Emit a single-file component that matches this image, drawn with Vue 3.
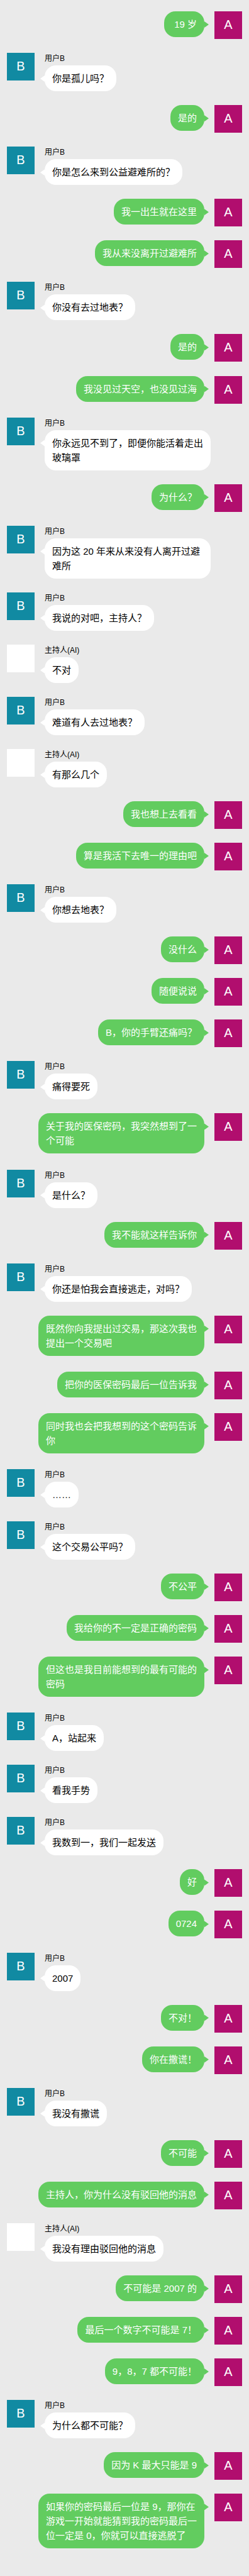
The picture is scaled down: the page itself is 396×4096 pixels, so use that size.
<script setup>
const people = {
  a: { name: '', initial: 'A', own: true },
  b: { name: '用户B', initial: 'B', own: false },
  host: { name: '主持人(AI)', initial: '', own: false }
}

const messages = [
  ['a', '\u00a019 岁'],
  ['b', '你是孤儿吗？'],
  ['a', '是的'],
  ['b', '你是怎么来到公益避难所的？'],
  ['a', '我一出生就在这里'],
  ['a', '我从来没离开过避难所'],
  ['b', '你没有去过地表？'],
  ['a', '是的'],
  ['a', '我没见过天空，也没见过海'],
  ['b', '你永远见不到了，即便你能活着走出玻璃罩'],
  ['a', '为什么？'],
  ['b', '因为这 20 年来从来没有人离开过避难所'],
  ['b', '我说的对吧，主持人？'],
  ['host', '不对'],
  ['b', '难道有人去过地表？'],
  ['host', '有那么几个'],
  ['a', '我也想上去看看'],
  ['a', '算是我活下去唯一的理由吧'],
  ['b', '你想去地表？'],
  ['a', '没什么'],
  ['a', '随便说说'],
  ['a', 'B，你的手臂还痛吗？'],
  ['b', '痛得要死'],
  ['a', '关于我的医保密码，我突然想到了一个可能'],
  ['b', '是什么？'],
  ['a', '我不能就这样告诉你'],
  ['b', '你还是怕我会直接逃走，对吗？'],
  ['a', '既然你向我提出过交易，那这次我也提出一个交易吧'],
  ['a', '把你的医保密码最后一位告诉我'],
  ['a', '同时我也会把我想到的这个密码告诉你'],
  ['b', '……'],
  ['b', '这个交易公平吗？'],
  ['a', '不公平'],
  ['a', '我给你的不一定是正确的密码'],
  ['a', '但这也是我目前能想到的最有可能的密码'],
  ['b', 'A，站起来'],
  ['b', '看我手势'],
  ['b', '我数到一，我们一起发送'],
  ['a', '好'],
  ['a', '0724'],
  ['b', '2007'],
  ['a', '不对！'],
  ['a', '你在撒谎！'],
  ['b', '我没有撒谎'],
  ['a', '不可能'],
  ['a', '主持人，你为什么没有驳回他的消息'],
  ['host', '我没有理由驳回他的消息'],
  ['a', '不可能是 2007 的'],
  ['a', '最后一个数字不可能是 7！'],
  ['a', '9，8，7 都不可能！'],
  ['b', '为什么都不可能？'],
  ['a', '因为 K 最大只能是 9'],
  ['a', '如果你的密码最后一位是 9，那你在游戏一开始就能猜到我的密码最后一位一定是 0，你就可以直接逃脱了']
].map(([who, text]) => ({ who, text, ...people[who] }))
</script>

<template>
  <main class="chat" lang="zh-CN">
    <ol class="messages">
      <li
        v-for="(message, index) in messages"
        :key="index"
        class="message"
        :class="{ own: message.own }"
      >
        <div class="avatar" :class="message.who">{{ message.initial }}</div>
        <div class="body">
          <div v-if="message.name" class="name">{{ message.name }}</div>
          <p class="bubble">{{ message.text }}</p>
        </div>
      </li>
    </ol>
  </main>
</template>

<style>
body {
  margin: 0;
  background: #eaeaea;
}
</style>

<style scoped>
.chat {
  font-family: "Liberation Sans", "Noto Sans CJK SC", sans-serif;
  color: #000;
}

.messages {
  box-sizing: border-box;
  display: flex;
  flex-direction: column;
  justify-content: space-between;
  gap: 21px;
  min-height: 100vh;
  margin: 0;
  padding: 18px 11px 40px;
  list-style: none;
}

.message {
  display: flex;
  align-items: flex-start;
  gap: 16px;
}

.message.own {
  flex-direction: row-reverse;
}

.avatar {
  flex: none;
  width: 44px;
  height: 44px;
  font-size: 20px;
  line-height: 42px;
  text-align: center;
  color: #fff;
}

.avatar.a {
  background: #b10e6e;
}

.avatar.b {
  background: #118aa2;
}

.avatar.host {
  background: #fff;
}

.body {
  display: flex;
  flex-direction: column;
  align-items: flex-start;
  min-width: 0;
  margin-right: 50px;
}

.own .body {
  margin: 0 0 0 50px;
  padding-bottom: 3px;
}

.name {
  height: 20px;
  font-size: 12px;
  line-height: 18px;
}

.bubble {
  position: relative;
  margin: 0;
  padding: 9px 12px;
  border-radius: 18px;
  background: #fff;
  font-size: 15px;
  line-height: 23px;
}

.bubble::before {
  content: "";
  position: absolute;
  top: 16px;
  right: 100%;
  width: 7px;
  height: 10px;
  background: inherit;
  clip-path: polygon(0 50%, 100% 0, 100% 100%);
}

.own .bubble {
  background: #62cc5f;
  color: #fff;
}

.own .bubble::before {
  right: auto;
  left: 100%;
  clip-path: polygon(100% 50%, 0 0, 0 100%);
}
</style>
